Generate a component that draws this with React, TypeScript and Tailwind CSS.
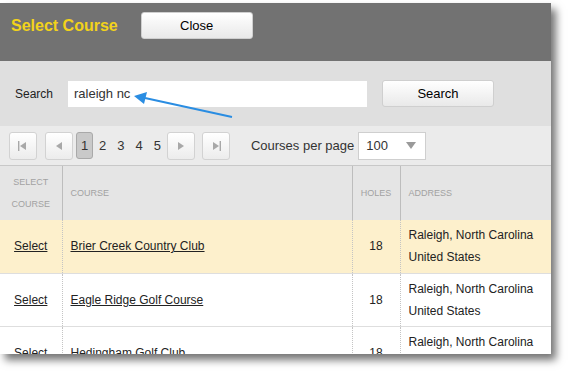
const font = { fontFamily: '"Liberation Sans", Arial, sans-serif' };

type Course = { name: string; holes: number; city: string; country: string; highlight?: boolean };

const courses: Course[] = [
  { name: 'Brier Creek Country Club', holes: 18, city: 'Raleigh, North Carolina', country: 'United States', highlight: true },
  { name: 'Eagle Ridge Golf Course', holes: 18, city: 'Raleigh, North Carolina', country: 'United States' },
  { name: 'Hedingham Golf Club', holes: 18, city: 'Raleigh, North Carolina', country: 'United States' },
];

function PagerButton({ kind }: { kind: 'first' | 'prev' | 'next' | 'last' }) {
  const left = kind === 'first' || kind === 'prev';
  return (
    <button
      type="button"
      className="flex h-[28px] w-[28px] items-center justify-center rounded-[3px] border border-[#d2d2d2] bg-gradient-to-b from-white to-[#ececec]"
    >
      <svg width="12" height="12" viewBox="0 0 12 12">
        {left ? <polygon points="9,2 9,10 3,6" fill="#a8a8a8" /> : <polygon points="3,2 3,10 9,6" fill="#a8a8a8" />}
        {kind === 'first' && <rect x="1" y="1" width="1.4" height="10" fill="#a8a8a8" />}
        {kind === 'last' && <rect x="9.6" y="1" width="1.4" height="10" fill="#a8a8a8" />}
      </svg>
    </button>
  );
}

export default function App() {
  return (
    <div className="h-[371px] w-[568px] bg-white" style={font}>
      <div className="relative ml-0 mt-[3px] h-[351px] w-[551px] overflow-hidden shadow-[5px_6px_8px_rgba(0,0,0,0.55)]">
        {/* header */}
        <div className="flex h-[58px] items-start gap-[23px] bg-[#727272] pl-[11px] pt-[9px]">
          <span className="text-[16px] font-bold leading-[27px] text-[#f2d31a]">Select Course</span>
          <button
            type="button"
            className="h-[27px] w-[112px] rounded-[3px] border border-[#cfcfcf] bg-gradient-to-b from-white to-[#e9e9e9] text-[13px] text-black"
          >
            Close
          </button>
        </div>

        {/* search */}
        <div className="flex h-[65px] items-center bg-[#dfdfdf] pl-[15px]">
          <span className="w-[53px] text-[12px] text-[#222]">Search</span>
          <div className="flex h-[26px] w-[299px] items-center bg-white pl-[6px] text-[13px] text-[#333]">raleigh nc</div>
          <button
            type="button"
            className="ml-[15px] h-[27px] w-[112px] rounded-[3px] border border-[#cfcfcf] bg-gradient-to-b from-white to-[#e9e9e9] text-[13px] text-black"
          >
            Search
          </button>
        </div>

        {/* pagination */}
        <div className="flex h-[40px] items-center border-b border-[#c8c8c8] bg-[#ebebeb] pl-[9px] text-[13px] text-[#333]">
          <PagerButton kind="first" />
          <div className="ml-[8px]">
            <PagerButton kind="prev" />
          </div>
          <span className="ml-[3px] flex h-[27px] w-[17px] items-center justify-center rounded-[3px] border border-[#a9a9a9] bg-[#c9c9c9]">1</span>
          <div className="ml-[6px] flex gap-[11px]">
            <span>2</span>
            <span>3</span>
            <span>4</span>
            <span>5</span>
          </div>
          <div className="ml-[6px]">
            <PagerButton kind="next" />
          </div>
          <div className="ml-[7px]">
            <PagerButton kind="last" />
          </div>
          <span className="ml-[21px] text-[13px]">Courses per page</span>
          <div className="ml-[4px] flex h-[28px] w-[68px] items-center justify-between border border-[#cfcfcf] bg-white pl-[7px] pr-[9px] text-[13px]">
            <span>100</span>
            <svg width="10" height="7" viewBox="0 0 10 7">
              <polygon points="0,0 10,0 5,7" fill="#9a9a9a" />
            </svg>
          </div>
        </div>

        {/* table */}
        <table className="w-full table-fixed border-collapse text-[12px] text-[#222]">
          <colgroup>
            <col className="w-[62px]" />
            <col className="w-[290px]" />
            <col className="w-[48px]" />
            <col />
          </colgroup>
          <thead>
            <tr className="h-[54px] bg-[#e5e5e5] text-[9px] font-normal uppercase leading-[22px] text-[#a2a2a2]">
              <th className="border-r border-[#bdbdbd] text-center font-normal">
                Select
                <br />
                Course
              </th>
              <th className="border-r border-[#bdbdbd] pl-[8px] text-left font-normal">Course</th>
              <th className="border-r border-[#bdbdbd] text-center font-normal">Holes</th>
              <th className="pl-[8px] text-left font-normal">Address</th>
            </tr>
          </thead>
          <tbody>
            {courses.map((c) => (
              <tr key={c.name} className={`h-[53px] border-b border-[#dedede] ${c.highlight ? 'bg-[#fdf0cc]' : 'bg-white'}`}>
                <td className="border-r border-dotted border-[#c4c4c4] text-center">
                  <span className="underline">Select</span>
                </td>
                <td className="border-r border-dotted border-[#c4c4c4] pl-[8px]">
                  <span className="underline">{c.name}</span>
                </td>
                <td className="border-r border-dotted border-[#c4c4c4] text-center">{c.holes}</td>
                <td className="pl-[8px] leading-[22px]">
                  {c.city}
                  <br />
                  {c.country}
                </td>
              </tr>
            ))}
          </tbody>
        </table>

        {/* annotation arrow */}
        <svg className="absolute left-0 top-0" width="551" height="351" viewBox="0 3 551 351">
          <line x1="232" y1="117" x2="145" y2="98" stroke="#2a8de2" strokeWidth="2" />
          <polygon points="134,96 147,92 144,104" fill="#2a8de2" />
        </svg>
      </div>
    </div>
  );
}
